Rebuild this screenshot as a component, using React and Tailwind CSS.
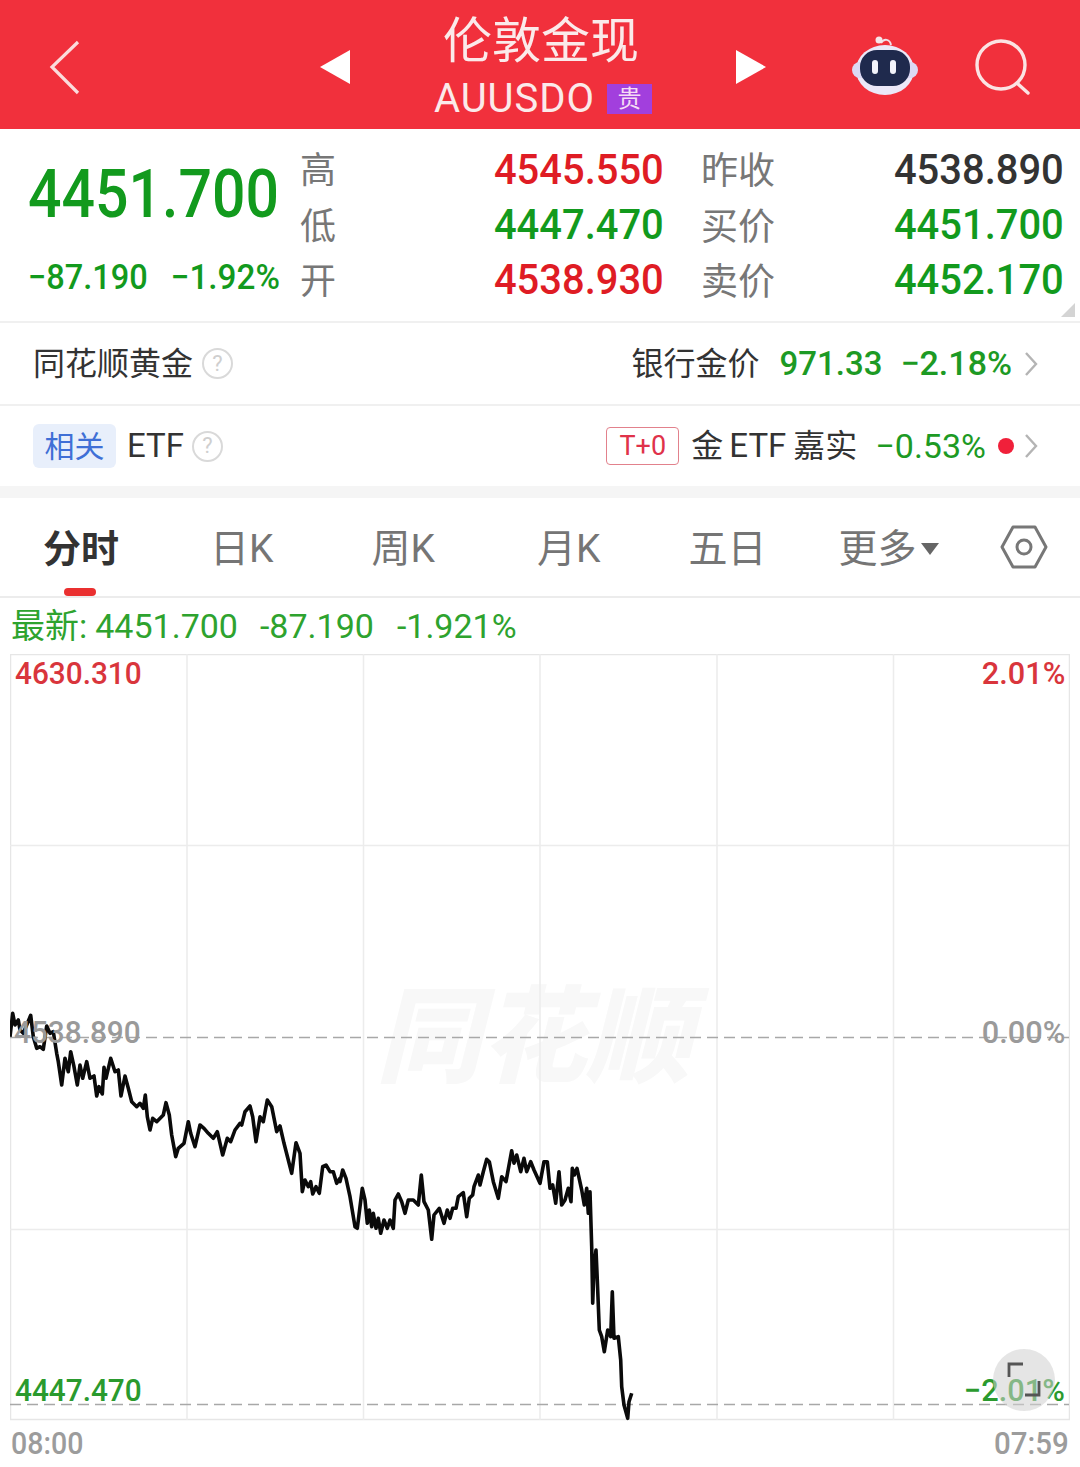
const CJK = "font-['Roboto','Noto_Sans_CJK_SC',sans-serif]";

const z5 = [[30,140],[38,70],[45,105],[55,90],[60,120],[70,130],[80,105],[92,76],[100,140],[110,175],[120,170],[130,178],[140,108],[150,130],[160,125],[170,190],[175,215],[185,285],[195,205],[205,245],[212,185],[222,230],[232,285],[240,225],[248,265],[260,215],[270,265],[282,258],[290,318],[297,290],[307,312],[312,232],[318,265],[332,205],[345,245],[355,240],[363,318],[375,258],[385,295],[395,335],[410,350],[420,340],[430,355],[436,315],[442,380],[450,420],[458,385],[470,395],[490,375],[498,338],[508,375],[515,435],[527,500],[535,475],[552,460],[565,395],[572,430],[585,470],[600,405],[612,415],[625,430],[640,445],[652,425],[668,495],[682,445],[692,455],[705,420],[720,400],[725,405],[735,365],[750,348],[758,380],[768,455],[780,380],[790,395],[802,330],[815,350],[830,425],[840,408],[852,460],[875,550],[888,458],[900,490],[907,605],[915,570],[925,590],[932,575],[938,612],[948,590],[958,610],[968,530],[978,525],[990,545],[1000,545],[1010,580],[1020,565]];
const z6 = [[30,185],[38,150],[48,175],[60,230],[75,320],[82,325],[97,205],[105,240],[112,310],[118,270],[125,320],[130,280],[138,325],[145,295],[152,340],[162,300],[172,325],[180,300],[190,325],[195,240],[205,222],[215,245],[225,280],[235,240],[250,240],[265,255],[274,165],[282,245],[295,270],[305,358],[312,285],[328,265],[342,310],[352,270],[360,295],[368,265],[378,265],[385,230],[400,218],[410,290],[418,235],[428,225],[432,200],[445,165],[450,195],[460,155],[470,118],[478,125],[490,185],[505,235],[515,170],[528,185],[545,92],[552,130],[560,105],[572,155],[582,115],[590,155],[602,125],[612,150],[630,190],[642,125],[652,125],[660,205],[668,195],[677,250],[687,155],[695,255],[705,240],[715,205],[723,245],[727,145],[733,165],[741,145],[755,210],[763,255],[770,205],[775,280],[780,215],[785,380],[788,550],[792,440],[798,390],[802,480],[808,630],[815,650],[823,695],[833,630],[842,650],[847,515],[852,655],[865,650],[872,720],[875,800],[882,855],[893,895],[897,845],[905,820]];
const line = [
  ...z5.map(([x, y]) => [x / 3, 990 + y / 3]),
  ...z6.map(([x, y]) => [330 + x / 3, 1120 + y / 3]),
].map(([x, y]) => `${x.toFixed(1)},${y.toFixed(1)}`).join(" ");

function Robot() {
  return (
    <svg width="68" height="64" viewBox="0 0 68 64">
      <path d="M30 9 C33 4 39 5 40 11" fill="none" stroke="#f1dfe8" strokeWidth="2" />
      <circle cx="28" cy="6" r="3.5" fill="#f6e6ea" />
      <ellipse cx="34" cy="36" rx="29" ry="25" fill="#ebe8f8" />
      <rect x="1" y="28" width="66" height="16" rx="8" fill="#dcd9f4" />
      <rect x="9" y="16" width="50" height="36" rx="17" fill="#1f2a4d" />
      <rect x="21" y="26" width="6" height="14" rx="3" fill="#f2f3fa" />
      <rect x="39" y="26" width="6" height="14" rx="3" fill="#f2f3fa" />
    </svg>
  );
}

function Help() {
  return (
    <span className="flex h-[31px] w-[31px] items-center justify-center rounded-full border-2 border-[#d9d9d9] text-[22px] leading-none text-[#cfcfcf]">?</span>
  );
}

function Chevron() {
  return (
    <svg width="14" height="26" viewBox="0 0 14 26" fill="none" stroke="#b4b4b4" strokeWidth="2.4">
      <path d="M2 2 L12 13 L2 24" />
    </svg>
  );
}

function Num({ children, color }) {
  return (
    <span className={`inline-block origin-right scale-x-[0.95] text-[42px] font-medium leading-[55px] ${color}`}>{children}</span>
  );
}

function QuoteCol({ labels, size }) {
  return (
    <div className={`flex flex-col leading-[55.5px] text-[#777777] ${size}`}>
      {labels.map((l) => <span key={l}>{l}</span>)}
    </div>
  );
}

function Tab({ children, className }) {
  return <span className={`text-[39px] leading-none text-[#757575] ${className}`}>{children}</span>;
}

export default function App() {
  return (
    <div className={`h-[1467px] w-[1080px] overflow-hidden bg-white ${CJK}`}>
      {/* header */}
      <header className="flex h-[129px] items-center bg-[#f1303c] text-[#fbeaea]">
        <svg className="ml-[49px] mt-[7px]" width="32" height="56" viewBox="0 0 32 56" fill="none" stroke="#fbdcdc" strokeWidth="3.2">
          <path d="M29 2 L3 27 L29 53" />
        </svg>
        <svg className="ml-[238px] mt-[5px]" width="32" height="36" viewBox="0 0 32 36"><path d="M1 18 L31 1 V35 Z" fill="#fff" /></svg>
        <div className="flex w-[384px] flex-col items-center self-start pt-[13px]">
          <span className="-ml-[4px] text-[49px] leading-[58px]">伦敦金现</span>
          <div className="mt-[8px] flex items-center gap-[12px]">
            <span className="text-[40px] leading-[40px] tracking-[1px]">AUUSDO</span>
            <span className="flex h-[30px] w-[45px] items-center justify-center bg-[#a23fdd] text-[24px] leading-none text-[#f6dcf5]">贵</span>
          </div>
        </div>
        <svg className="mt-[5px]" width="32" height="36" viewBox="0 0 32 36"><path d="M31 18 L1 1 V35 Z" fill="#fff" /></svg>
        <div className="ml-[84px] mt-[3px]"><Robot /></div>
        <svg className="ml-[56px] mt-[6px]" width="58" height="58" viewBox="0 0 58 58" fill="none" stroke="#fbe3e3" strokeWidth="3.4">
          <circle cx="26" cy="26" r="24" />
          <path d="M43 45 L53 54" strokeLinecap="round" />
        </svg>
      </header>

      {/* quote */}
      <section className="relative flex h-[194px] border-b-2 border-[#f0f0f0]">
        <div className="ml-[28px] flex w-[252px] flex-col text-[#129a1d]">
          <span className="mt-[27px] inline-block origin-left scale-x-[0.88] whitespace-nowrap text-[67px] font-medium leading-[76px]">4451.700</span>
          <div className="mt-[26px] flex justify-between text-[35px] font-medium leading-[40px]">
            <span className="inline-block origin-left scale-x-[0.93]">−87.190</span>
            <span className="inline-block origin-right scale-x-[0.95]">−1.92%</span>
          </div>
        </div>
        <div className="ml-[20px] mt-[15px]"><QuoteCol size="text-[36px]" labels={["高", "低", "开"]} /></div>
        <div className="ml-[124px] mt-[13px] flex w-[204px] flex-col items-end">
          <Num color="text-[#df1c24]">4545.550</Num>
          <Num color="text-[#129a1d]">4447.470</Num>
          <Num color="text-[#df1c24]">4538.930</Num>
        </div>
        <div className="ml-[37px] mt-[15px]"><QuoteCol size="text-[37px]" labels={["昨收", "买价", "卖价"]} /></div>
        <div className="ml-auto mr-[16px] mt-[13px] flex w-[214px] flex-col items-end">
          <Num color="text-[#333333]">4538.890</Num>
          <Num color="text-[#129a1d]">4451.700</Num>
          <Num color="text-[#129a1d]">4452.170</Num>
        </div>
        <svg className="absolute bottom-[4px] right-[5px]" width="14" height="14" viewBox="0 0 14 14"><path d="M14 0 V14 H0 Z" fill="#d4d4d4" /></svg>
      </section>

      {/* 同花顺黄金 */}
      <div className="flex h-[83px] items-center border-b-2 border-[#f0f0f0] pl-[33px] pr-[42px] text-[32px] text-[#333333]">
        <span>同花顺黄金</span>
        <span className="ml-[9px]"><Help /></span>
        <span className="ml-auto">银行金价</span>
        <span className="ml-[20px] text-[33px] font-medium text-[#1d9a24]">971.33</span>
        <span className="ml-[18px] text-[34px] font-medium text-[#1d9a24]">−2.18%</span>
        <span className="ml-[12px]"><Chevron /></span>
      </div>

      {/* ETF */}
      <div className="flex h-[80px] items-center pl-[33px] pr-[42px] text-[32px] text-[#333333]">
        <span className="flex h-[44px] w-[83px] items-center justify-center rounded-[6px] bg-[#e8effb] text-[30px] text-[#3f6fd6]">相关</span>
        <span className="ml-[11px] text-[33px]">ETF</span>
        <span className="ml-[8px]"><Help /></span>
        <span className="ml-auto flex h-[38px] w-[73px] items-center justify-center rounded-[4px] border border-[#e2818c] text-[27px] text-[#e0324a]">T+0</span>
        <span className="ml-[12px]">金</span>
        <span className="ml-[6px] text-[33px]">ETF</span>
        <span className="ml-[7px]">嘉实</span>
        <span className="ml-[18px] text-[34px] text-[#1d9a24]">−0.53%</span>
        <span className="ml-[12px] h-[16px] w-[16px] rounded-full bg-[#f0203a]" />
        <span className="ml-[10px]"><Chevron /></span>
      </div>

      <div className="h-[12px] bg-[#f5f5f5]" />

      {/* tabs */}
      <nav className="relative flex h-[100px] items-center border-b-2 border-[#ececec] pt-[4px]">
        <span className="ml-[43px] text-[38px] font-bold leading-none text-[#333333]">分时</span>
        <Tab className="ml-[91px]">日K</Tab>
        <Tab className="ml-[98px]">周K</Tab>
        <Tab className="ml-[102px]">月K</Tab>
        <Tab className="ml-[88px]">五日</Tab>
        <Tab className="ml-[72px]">更多</Tab>
        <svg className="ml-[4px]" width="18" height="12" viewBox="0 0 18 12"><path d="M0 0 H18 L9 12 Z" fill="#666666" /></svg>
        <svg className="ml-[61px] -mt-[4px]" width="48" height="44" viewBox="0 0 48 44" fill="none" stroke="#777777" strokeWidth="3">
          <path d="M13 2 H35 L46 22 L35 42 H13 L2 22 Z" strokeLinejoin="round" />
          <circle cx="24" cy="22" r="7" />
        </svg>
        <span className="absolute bottom-0 left-[64px] h-[8px] w-[32px] rounded-[4px] bg-[#ea3030]" />
      </nav>

      {/* latest */}
      <div className="flex h-[56px] items-center pl-[11px] text-[34px] text-[#2ea32e]">
        <span>最新:</span>
        <span className="ml-[8px]">4451.700</span>
        <span className="ml-[22px]">-87.190</span>
        <span className="ml-[23px]">-1.921%</span>
      </div>

      {/* chart */}
      <div className="relative ml-[10px] h-[767px] w-[1060px] text-[31px] leading-none">
        <span className="absolute left-[366px] top-[332px] text-[105px] font-black italic leading-none text-[#f8f8f8]">同花顺</span>
        <svg className="absolute inset-0" width="1060" height="767" viewBox="10 654 1060 767" fill="none">
          <rect x="10.5" y="654.5" width="1059" height="765" stroke="#e6e6e6" strokeWidth="1.5" />
          <path d="M187 654V1420M363.5 654V1420M540 654V1420M717 654V1420M893.5 654V1420M10 845.5H1069M10 1229.5H1069" stroke="#ececec" strokeWidth="1.5" />
          <path d="M10 1037.5H1069M10 1404.5H1069" stroke="#a8a8a8" strokeWidth="1.6" strokeDasharray="11 6" />
          <polyline points={line} stroke="#0a0a0a" strokeWidth="3.6" strokeLinejoin="round" />
        </svg>
        <span className="absolute left-[5px] top-[4px] origin-left scale-x-[0.96] font-medium text-[#d9353c]">4630.310</span>
        <span className="absolute right-[5px] top-[4px] origin-right scale-x-[0.99] font-medium text-[#d9353c]">2.01%</span>
        <span className="absolute left-[4px] top-[363px] origin-left scale-x-[0.96] font-medium text-[#9a9a9a]">4538.890</span>
        <span className="absolute right-[5px] top-[363px] origin-right scale-x-[0.99] font-medium text-[#9a9a9a]">0.00%</span>
        <span className="absolute left-[5px] top-[721px] origin-left scale-x-[0.96] font-medium text-[#2a9a2e]">4447.470</span>
        <span className="absolute right-[5px] top-[721px] origin-right scale-x-[0.99] font-medium text-[#2a9a2e]">−2.01%</span>
        <span className="absolute left-[983px] top-[695px] flex h-[62px] w-[62px] items-center justify-center rounded-full bg-[#d0d0d0]/55">
          <svg width="36" height="38" viewBox="0 0 36 38" fill="none" stroke="#555555" strokeWidth="2.8">
            <path d="M3 16 V3 H17" />
            <path d="M33 20 V34 H19" />
          </svg>
        </span>
      </div>

      {/* time axis */}
      <div className="flex h-[46px] items-center justify-between pl-[11px] pr-[11px] text-[31px] font-medium text-[#9c9c9c]">
        <span className="origin-left scale-x-[0.92]">08:00</span>
        <span className="origin-right scale-x-[0.95]">07:59</span>
      </div>
    </div>
  );
}
